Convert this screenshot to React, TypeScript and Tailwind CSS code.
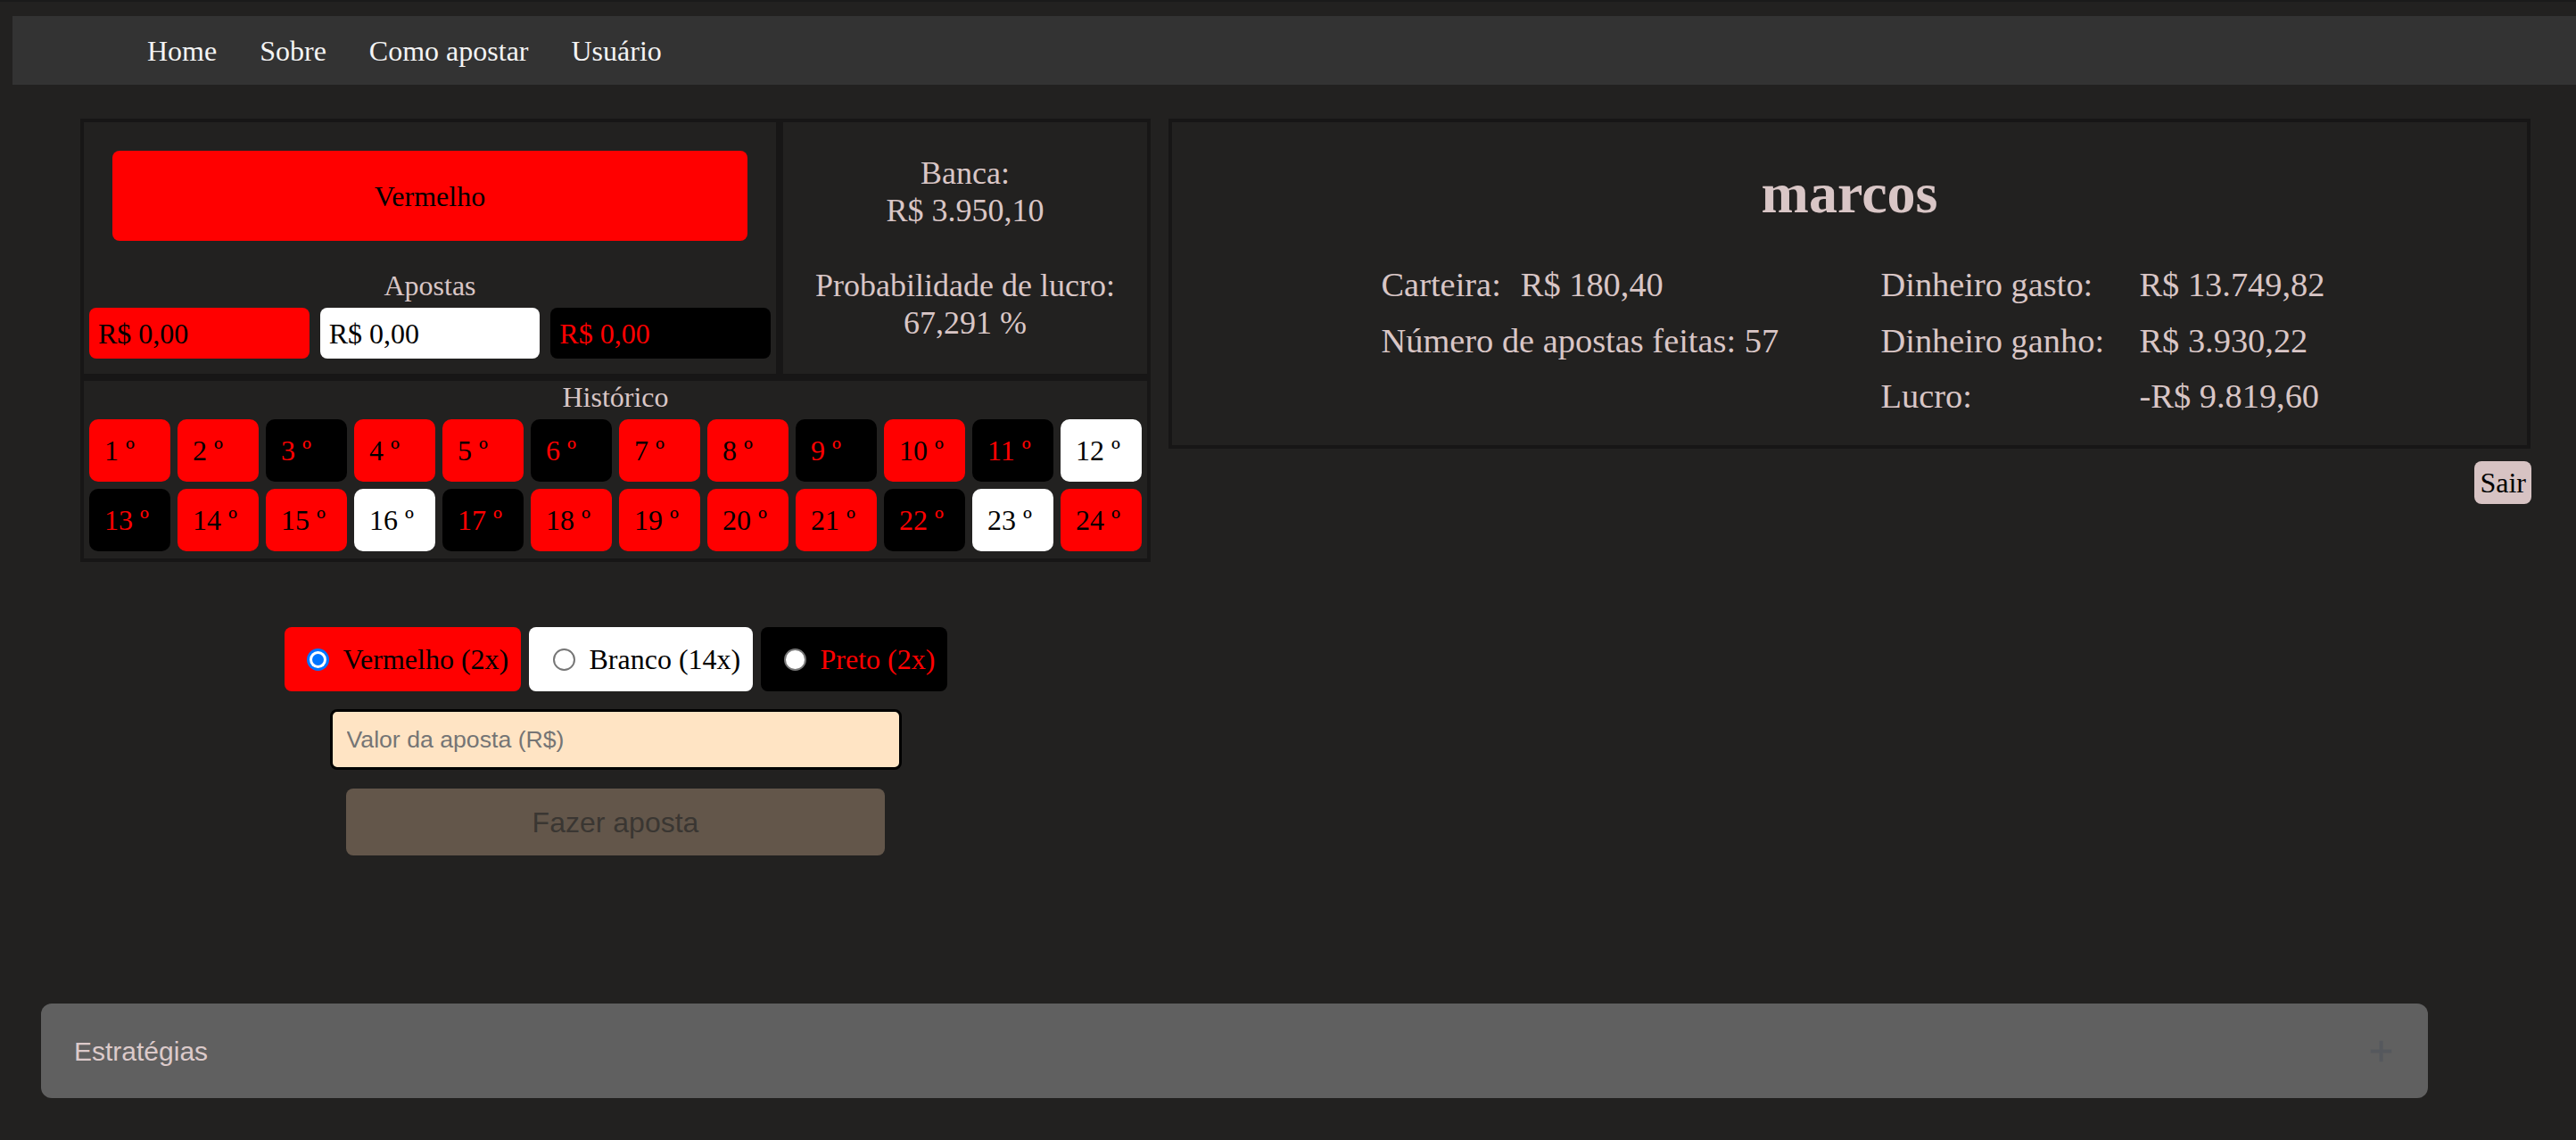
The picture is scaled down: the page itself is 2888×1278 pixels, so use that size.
import React from 'react';

type Cor = 'red' | 'black' | 'white';

const historico: Cor[] = [
  'red', 'red', 'black', 'red', 'red', 'black', 'red', 'red', 'black', 'red', 'black', 'white',
  'black', 'red', 'red', 'white', 'black', 'red', 'red', 'red', 'red', 'black', 'white', 'red',
];

const chipClass: Record<Cor, string> = {
  red: 'bg-[#ff0000] text-black',
  black: 'bg-black text-[#ff0000]',
  white: 'bg-white text-black',
};

const serif = "font-['Liberation_Serif',serif]";
const sans = "font-['Liberation_Sans',Arial,sans-serif]";

const Radio = ({ checked }: { checked?: boolean }) =>
  checked ? (
    <span className="w-[25px] h-[25px] shrink-0 rounded-full bg-[#0075ff] p-[3px]">
      <span className="block w-full h-full rounded-full bg-white p-[3px]">
        <span className="block w-full h-full rounded-full bg-[#0075ff]" />
      </span>
    </span>
  ) : (
    <span className="w-[25px] h-[25px] shrink-0 rounded-full bg-white border-[2px] border-[#767676]" />
  );

const App: React.FC = () => {
  return (
    <div className={`min-h-screen bg-[#222120] border-t-2 border-[#1a1a1a] ${serif}`}>
      {/* Navbar */}
      <nav className="mt-[16px] ml-[14px] h-[77px] bg-[#333333] flex items-center pl-[151px] gap-[48px] text-[32px] text-[#f4f4f4]">
        <span>Home</span>
        <span>Sobre</span>
        <span>Como apostar</span>
        <span>Usuário</span>
      </nav>

      <main className="flex gap-[20px] pl-[90px] pr-[51px] pt-[38px]">
        {/* Coluna da roleta */}
        <div className="w-[1200px] shrink-0">
          <div className="flex">
            <div className="w-[784px] h-[290px] border-4 border-[#171616] flex flex-col">
              <div className="mx-[32px] mt-[32px] h-[101px] rounded-[8px] bg-[#ff0000] flex items-center justify-center text-[32px] text-black">
                Vermelho
              </div>
              <div className="mt-[32px] leading-[37px] text-center text-[32px] text-[#d9c6c6]">Apostas</div>
              <div className="mt-[6px] px-[6px] grid grid-cols-3 gap-[12px]">
                <div className="h-[57px] rounded-[8px] bg-[#ff0000] text-black text-[32px] pl-[10px] flex items-center">R$ 0,00</div>
                <div className="h-[57px] rounded-[8px] bg-white text-black text-[32px] pl-[10px] flex items-center">R$ 0,00</div>
                <div className="h-[57px] rounded-[8px] bg-black text-[#ff0000] text-[32px] pl-[10px] flex items-center">R$ 0,00</div>
              </div>
            </div>
            <div className="w-[416px] h-[290px] border-4 border-[#171616] flex flex-col items-center justify-center text-center text-[36px] leading-[42px] text-[#d9c6c6]">
              <div>Banca:</div>
              <div>R$ 3.950,10</div>
              <div className="h-[42px]" />
              <div>Probabilidade de lucro:</div>
              <div>67,291 %</div>
            </div>
          </div>

          <div className="h-[207px] border-4 border-[#171616]">
            <div className="leading-[37px] text-center text-[32px] text-[#d9c6c6]">Histórico</div>
            <div className="mt-[6px] px-[6px] grid grid-cols-12 gap-[8px]">
              {historico.map((cor, i) => (
                <div
                  key={i}
                  className={`h-[70px] rounded-[10px] flex items-center pl-[17px] text-[32px] ${chipClass[cor]}`}
                >
                  {i + 1} º
                </div>
              ))}
            </div>
          </div>

          {/* Formulário de aposta */}
          <div className="mt-[73px] flex flex-col items-center">
            <div className="flex gap-[9px] text-[32px]">
              <label className="h-[72px] w-[265px] rounded-[8px] bg-[#ff0000] text-black flex items-center pl-[25px] gap-[16px]">
                <Radio checked />
                Vermelho (2x)
              </label>
              <label className="h-[72px] w-[251px] rounded-[8px] bg-white text-black flex items-center pl-[27px] gap-[16px]">
                <Radio />
                Branco (14x)
              </label>
              <label className="h-[72px] w-[209px] rounded-[8px] bg-black text-[#ff0000] flex items-center pl-[26px] gap-[16px]">
                <Radio />
                Preto (2x)
              </label>
            </div>
            <input
              type="text"
              placeholder="Valor da aposta (R$)"
              className={`mt-[20px] w-[641px] h-[68px] rounded-[8px] border-[3px] border-black bg-[#ffe4c4] pl-[16px] text-[26.67px] text-black placeholder:text-[#757575] outline-none ${sans}`}
            />
            <button
              disabled
              className={`mt-[21px] w-[604px] h-[75px] rounded-[8px] bg-[#63564a] text-[#3a3632] text-[32px] ${sans}`}
            >
              Fazer aposta
            </button>
          </div>
        </div>

        {/* Coluna do usuário */}
        <div className="flex-1 flex flex-col">
          <div className="h-[370px] border-4 border-[#171616] flex flex-col items-center pt-[43px] text-[#d9c6c6]">
            <h1 className="text-[64px] font-bold leading-[74px]">marcos</h1>
            <div className="mt-[34px] pl-[8px] flex text-[38.4px] leading-[62.5px]">
              <div className="w-[560px]">
                <div className="flex gap-[22px]">
                  <span>Carteira:</span>
                  <span>R$ 180,40</span>
                </div>
                <div>Número de apostas feitas: 57</div>
              </div>
              <div>
                <div className="flex"><span className="w-[290px]">Dinheiro gasto:</span><span>R$ 13.749,82</span></div>
                <div className="flex"><span className="w-[290px]">Dinheiro ganho:</span><span>R$ 3.930,22</span></div>
                <div className="flex"><span className="w-[290px]">Lucro:</span><span>-R$ 9.819,60</span></div>
              </div>
            </div>
          </div>
          <div className="mt-[14px] flex justify-end -mr-[1px]">
            <button className="h-[48px] px-[6px] rounded-[8px] bg-[#d7c3c3] text-black text-[32px] leading-none">Sair</button>
          </div>
        </div>
      </main>

      {/* Estratégias */}
      <div className="mt-[166px] ml-[46px] w-[2676px] h-[106px] rounded-[12px] bg-[#606060] flex items-center justify-between pl-[37px] pr-[38px]">
        <span className={`text-[30px] text-[#dccaca] ${sans}`}>Estratégias</span>
        <svg width="29" height="29" viewBox="0 0 16 16" fill="none">
          <path d="M8 1.5v13M1.5 8h13" stroke="#55585d" strokeWidth="2.2" />
        </svg>
      </div>
      <div className="h-[47px]" />
    </div>
  );
};

export default App;
